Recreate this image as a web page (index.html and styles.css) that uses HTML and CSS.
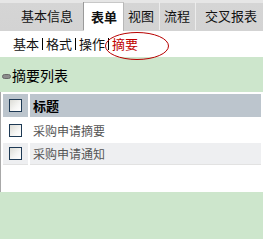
FILE: index.html
```html
<!DOCTYPE html>
<html lang="zh-CN">
<head>
    <meta charset="UTF-8">
    <title>表单 - 摘要</title>
    <link rel="stylesheet" href="styles.css">
</head>
<body>
    <div class="tabs">
        <a class="tab tab-first">基本信息</a>
        <a class="tab active">表单</a>
        <a class="tab">视图</a>
        <a class="tab">流程</a>
        <a class="tab tab-last">交叉报表</a>
    </div>

    <div class="subtabs">
        <a class="subtab">基本</a>
        <a class="subtab">格式</a>
        <a class="subtab">操作</a>
        <a class="subtab current">摘要</a>
        <!-- hand-drawn annotation around the current item -->
        <svg class="mark" viewBox="0 0 66 30">
            <ellipse cx="33" cy="15" rx="31.5" ry="13.5" fill="none" stroke="#b80000" stroke-width="1"/>
        </svg>
    </div>

    <div class="section-title">
        <span class="section-icon"></span>摘要列表
    </div>

    <div class="list-panel">
        <table class="list">
            <tr class="list-head">
                <td class="col-check"><span class="checkbox"></span></td>
                <td>标题</td>
            </tr>
            <tr>
                <td class="col-check"><span class="checkbox"></span></td>
                <td>采购申请摘要</td>
            </tr>
            <tr class="alt">
                <td class="col-check"><span class="checkbox"></span></td>
                <td>采购申请通知</td>
            </tr>
        </table>
    </div>
</body>
</html>
```

FILE: styles.css
```css
* {
    margin: 0;
    padding: 0;
    box-sizing: border-box;
}

body {
    font-family: "Noto Sans CJK SC", "DejaVu Sans", sans-serif;
    font-size: 13px;
    background: #cde6cc;
    color: #000;
    min-height: 100vh;
}

/* top tab bar */
.tabs {
    height: 31px;
    display: flex;
    align-items: flex-end;
    background: linear-gradient(#e6e6e6 0, #e6e6e6 3px, #d5d5d5 3px, #d3d3d3 100%);
    border-bottom: 1px solid #d3d3d3;
}

.tab {
    height: 28px;
    line-height: 28px;
    padding: 0 5px 0 4px;
    border-right: 1px solid #ececec;
    color: #111;
}

.tab-first {
    padding: 0 10px 0 21px;
    border-right: 1px solid #9a9a9a;
}

.tab-last {
    padding-left: 9px;
    border-right: none;
}

.tab.active {
    height: 28px;
    padding: 0 6px 0 7px;
    background: #fff;
    font-weight: bold;
    border-top: 1px solid #c8c8c8;
    border-right: 1px solid #b8b8b8;
    margin-bottom: -1px;
    height: 29px;
}

/* second level */
.subtabs {
    position: relative;
    height: 26px;
    background: #fff;
    display: flex;
    align-items: center;
    padding-left: 13px;
}

.subtab {
    padding: 0 3px;
    line-height: 12px;
    border-right: 1px solid #000;
    color: #111;
}

.subtab:first-child {
    padding-left: 0;
}

.subtab.current {
    color: #c00000;
    border-right: none;
}

.mark {
    position: absolute;
    left: 104px;
    top: 0;
    width: 66px;
    height: 30px;
}

/* green section header */
.section-title {
    height: 35px;
    display: flex;
    align-items: center;
    font-size: 14px;
    padding-left: 2px;
}

.section-icon {
    width: 9px;
    height: 5px;
    margin-top: 3px;
    margin-right: 1px;
    border-radius: 3px;
    background: #8c8c8c;
    border: 1px solid #6a6a6a;
}

/* list */
.list-panel {
    background: #fff;
    border-left: 1px solid #a8a8a8;
    height: 100px;
}

.list {
    width: 100%;
    border-spacing: 2px;
    font-size: 12px;
    color: #555;
}

.list td {
    height: 22px;
    padding: 0 0 0 3px;
}

.list .col-check {
    width: 25px;
    padding: 0 0 0 6px;
}

.list-head td {
    height: 23px;
    background: #bcc5cd;
    color: #000;
    font-weight: bold;
    font-size: 13px;
}

.list .alt td {
    background: #eeeff1;
    border-bottom: 1px solid #e2e2e2;
}

.checkbox {
    display: block;
    width: 13px;
    height: 13px;
    border: 1px solid #1e3a55;
    background: linear-gradient(135deg, #dcdcd6 0%, #f6f6f4 60%, #fff 100%);
}
```
